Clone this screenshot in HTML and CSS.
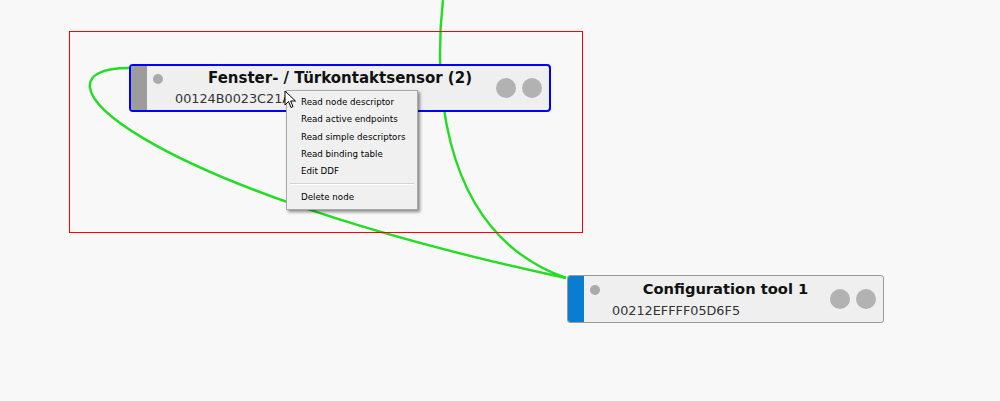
FILE: index.html
```html
<!DOCTYPE html>
<html lang="en">
<head>
    <meta charset="UTF-8">
    <title>Node graph</title>
    <link rel="stylesheet" href="styles.css">
</head>
<body>
    <div class="canvas">
        <!-- Links between nodes -->
        <svg class="links" width="1000" height="401" viewBox="0 0 1000 401">
            <path d="M129 68 C20 68, 130 185, 566 278" />
            <path d="M443 0 C436 60, 430 230, 566 278" />
        </svg>

        <!-- Selection frame -->
        <div class="selection"></div>

        <!-- Node: sensor -->
        <div class="node node-selected" style="left:129px; top:64px; width:422px;">
            <div class="node-bar"></div>
            <span class="node-dot"></span>
            <div class="node-title">Fenster- / Türkontaktsensor (2)</div>
            <div class="node-id">00124B0023C21A</div>
            <div class="node-ports"><span></span><span></span></div>
        </div>

        <!-- Node: coordinator -->
        <div class="node node-coordinator" style="left:567px; top:275px; width:317px;">
            <div class="node-bar"></div>
            <span class="node-dot"></span>
            <div class="node-title">Configuration tool 1</div>
            <div class="node-id">00212EFFFF05D6F5</div>
            <div class="node-ports"><span></span><span></span></div>
        </div>

        <!-- Context menu -->
        <ul class="context-menu">
            <li>Read node descriptor</li>
            <li>Read active endpoints</li>
            <li>Read simple descriptors</li>
            <li>Read binding table</li>
            <li>Edit DDF</li>
            <li class="separator"></li>
            <li>Delete node</li>
        </ul>

        <!-- Mouse pointer -->
        <svg class="pointer" width="14" height="20" viewBox="0 0 14 20">
            <path d="M1 1 L1 15 L4.5 11.5 L7 17.5 L9 16.6 L6.6 11 L11.5 11 Z" />
        </svg>
    </div>
</body>
</html>
```

FILE: styles.css
```css
/* General */
body {
    margin: 0;
    padding: 0;
    background: #f8f8f8;
    font-family: 'DejaVu Sans', sans-serif;
}

.canvas {
    position: relative;
    width: 1000px;
    height: 401px;
    overflow: hidden;
}

/* Links */
.links {
    position: absolute;
    left: 0;
    top: 0;
}

.links path {
    fill: none;
    stroke: #22dd22;
    stroke-width: 2.4;
}

/* Selection frame */
.selection {
    position: absolute;
    left: 69px;
    top: 31px;
    width: 512px;
    height: 200px;
    border: 1px solid #ff0000;
}

/* Nodes */
.node {
    position: absolute;
    box-sizing: border-box;
    height: 48px;
    display: grid;
    grid-template-columns: 16px 1fr auto;
    grid-template-rows: 22px 1fr;
    background: #efefef;
    border: 1px solid #9a9a9a;
    border-radius: 3px;
    overflow: hidden;
}

.node-selected {
    border: 2px solid #0000ff;
    border-radius: 4px;
    grid-template-rows: 21px 1fr;
}

.node-bar {
    grid-column: 1;
    grid-row: 1 / 3;
    background: #9c9c9c;
}

.node-coordinator .node-bar {
    background: #0a7dd2;
}

.node-title {
    grid-column: 1 / -1;
    grid-row: 1;
    align-self: end;
    text-align: center;
    font-weight: bold;
    font-size: 15px;
    color: #111;
    line-height: 18px;
}

.node-coordinator .node-title {
    font-size: 14.7px;
}

.node-dot {
    grid-column: 2;
    grid-row: 1;
    align-self: end;
    width: 10px;
    height: 10px;
    margin: 0 0 3px 6px;
    border-radius: 50%;
    background: #aaaaaa;
}

.node-id {
    grid-column: 2;
    grid-row: 2;
    align-self: center;
    padding-left: 28px;
    font-size: 12.8px;
    color: #333;
}

.node-ports {
    grid-column: 3;
    grid-row: 1 / 3;
    align-self: center;
    display: flex;
    gap: 6px;
    margin-right: 7px;
}

.node-ports span {
    width: 20px;
    height: 20px;
    border-radius: 50%;
    background: #b2b2b2;
}

/* Context menu */
.context-menu {
    position: absolute;
    left: 286px;
    top: 90px;
    width: 132px;
    box-sizing: border-box;
    margin: 0;
    padding: 3px 2px 2px;
    list-style: none;
    background: #f0f0f0;
    border: 1px solid #a9a9a9;
    box-shadow: 2px 2px 3px rgba(0, 0, 0, 0.45);
    font-size: 8.7px;
    color: #000;
}

.context-menu li {
    height: 17.3px;
    line-height: 17.3px;
    padding-left: 12px;
    white-space: nowrap;
}

.context-menu .separator {
    height: 1px;
    margin: 3px 1px 4px;
    padding: 0;
    background: #d4d4d4;
    border-bottom: 1px solid #fff;
}

/* Pointer */
.pointer {
    position: absolute;
    left: 284px;
    top: 90px;
}

.pointer path {
    fill: #fff;
    stroke: #000;
    stroke-width: 1;
    stroke-linejoin: miter;
}
```
